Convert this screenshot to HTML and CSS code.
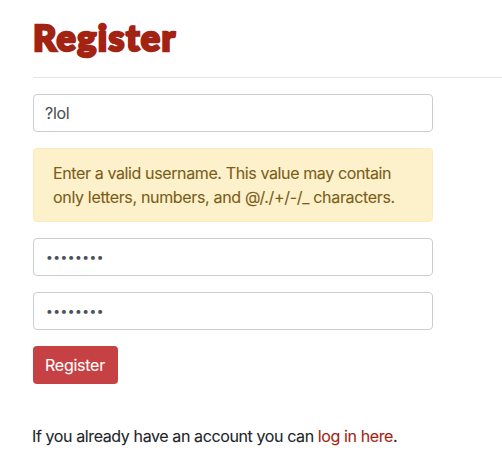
FILE: index.html
```html
<!DOCTYPE html>
<html lang="en">
<head>
<meta charset="utf-8">
<title>Register</title>
<link rel="stylesheet" href="styles.css">
</head>
<body>
<main class="page">
  <h1 class="title">Register</h1>
  <hr class="rule">
  <form class="form">
    <input class="field" type="text" value="?lol" aria-label="Username">
    <div class="alert"><div class="line line-one">Enter a valid username. This value may contain</div><div class="line line-two">only letters, numbers, and @/./+/-/_ characters.</div></div>
    <div class="field password">••••••••</div>
    <div class="field password">••••••••</div>
    <button class="button" type="button">Register</button>
  </form>
  <p class="login"><span>If you already have an account you can </span><a href="#">log in here</a>.</p>
</main>
</body>
</html>
```

FILE: styles.css
```css
* { box-sizing: border-box; }
body {
  margin: 0;
  background: #fff;
  color: #212529;
  font: 16px/24px Inter, sans-serif;
  -webkit-text-stroke: 0.1px currentColor;
  overflow: hidden;
}
.page { padding: 15px 0 0 33px; }
.title {
  margin: 0;
  height: 46px;
  font: 900 36px/44px Lato, sans-serif;
  letter-spacing: 1.4px;
  color: #a32313;
  -webkit-text-stroke: 2.5px #a32313;
}
.rule { margin: 16px 0; border: 0; border-top: 1px solid #e5e5e5; }
.form {
  width: 400px;
  display: flex;
  flex-direction: column;
  align-items: flex-start;
  gap: 16px;
}
.field {
  width: 100%;
  height: 38px;
  padding: 6px 11px;
  border: 1px solid #c9ced5;
  border-radius: 4px;
  background: #fff;
  color: #495057;
  font: inherit;
  letter-spacing: -0.3px;
}
.password { padding-left: 12px; letter-spacing: 0.5px; font-size: 12px; }
.alert {
  width: 100%;
  height: 74px;
  padding: 12px 19px;
  border: 1px solid #fdeab8;
  border-radius: 4px;
  background: #fdf1cc;
  color: #7b5d18;
  white-space: nowrap;
}
.line-one { letter-spacing: -0.38px; }
.line-two { letter-spacing: -0.33px; }
.button {
  height: 38px;
  width: 85px;
  padding: 0 1px 0 0;
  border: 0;
  border-radius: 4px;
  background: #c54143;
  color: #fff;
  font: inherit;
  letter-spacing: -0.25px;
}
.login { margin: 40px 0 0 -1px; letter-spacing: -0.39px; }
.login a { color: #a32313; text-decoration: none; }
```
